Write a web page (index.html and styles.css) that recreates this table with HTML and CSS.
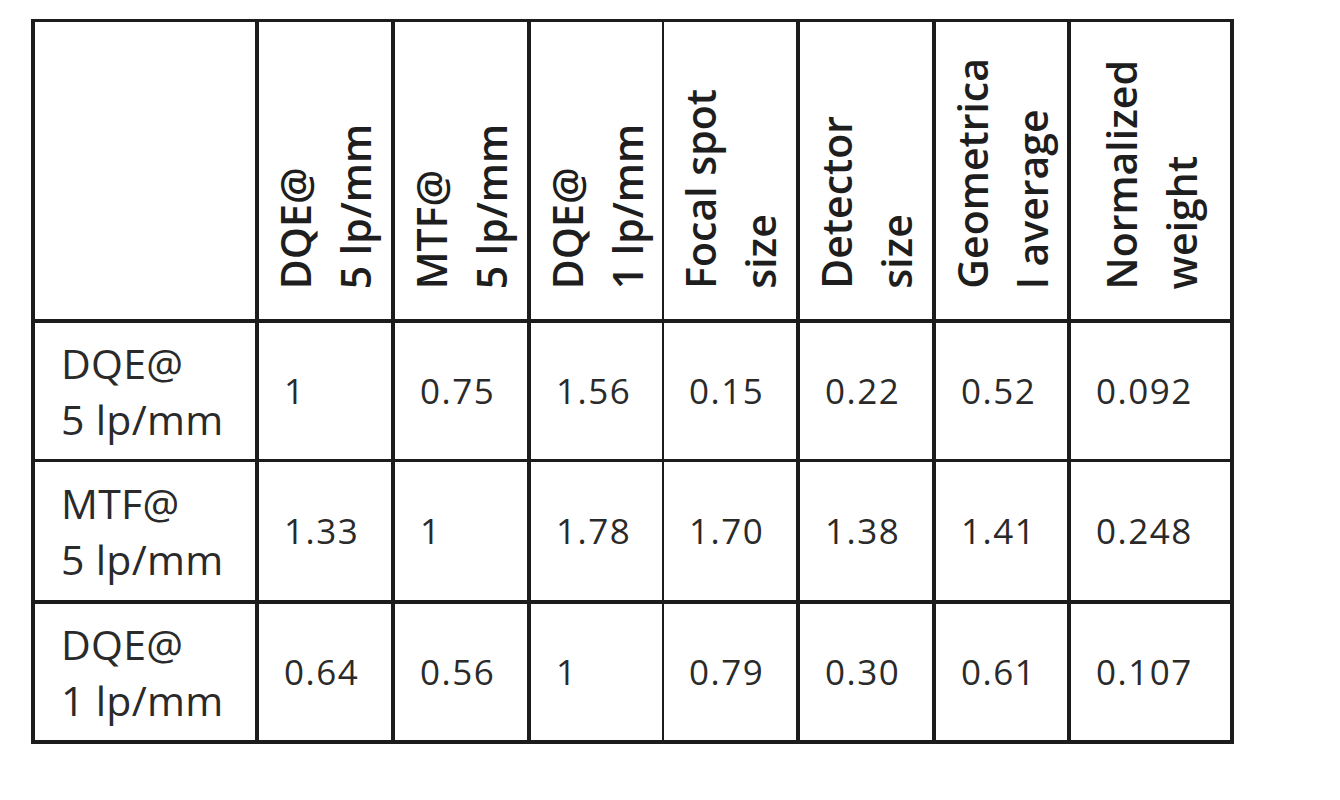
FILE: index.html
```html
<!DOCTYPE html>
<html lang="en">
<head>
<meta charset="utf-8">
<title>Weight table</title>
<link rel="stylesheet" href="styles.css">
</head>
<body>
<div class="table">
  <div class="cell head corner"></div>
  <div class="cell head"><div class="rot">DQE@<br>5 lp/mm</div></div>
  <div class="cell head"><div class="rot">MTF@<br>5 lp/mm</div></div>
  <div class="cell head thin"><div class="rot">DQE@<br>1 lp/mm</div></div>
  <div class="cell head"><div class="rot">Focal spot<br>size</div></div>
  <div class="cell head"><div class="rot">Detector<br>size</div></div>
  <div class="cell head"><div class="rot">Geometrica<br>l average</div></div>
  <div class="cell head"><div class="rot">Normalized<br>weight</div></div>

  <div class="cell label r1">DQE@<br>5 lp/mm</div>
  <div class="cell num r1">1</div>
  <div class="cell num r1">0.75</div>
  <div class="cell num r1 thin">1.56</div>
  <div class="cell num r1">0.15</div>
  <div class="cell num r1">0.22</div>
  <div class="cell num r1">0.52</div>
  <div class="cell num r1">0.092</div>

  <div class="cell label">MTF@<br>5 lp/mm</div>
  <div class="cell num">1.33</div>
  <div class="cell num">1</div>
  <div class="cell num thin">1.78</div>
  <div class="cell num">1.70</div>
  <div class="cell num">1.38</div>
  <div class="cell num">1.41</div>
  <div class="cell num">0.248</div>

  <div class="cell label">DQE@<br>1 lp/mm</div>
  <div class="cell num">0.64</div>
  <div class="cell num">0.56</div>
  <div class="cell num thin">1</div>
  <div class="cell num">0.79</div>
  <div class="cell num">0.30</div>
  <div class="cell num">0.61</div>
  <div class="cell num">0.107</div>
</div>
</body>
</html>
```
FILE: styles.css
```css
html, body {
  margin: 0;
  padding: 0;
  background: #ffffff;
}

body {
  font-family: "Open Sans", "Noto Sans", sans-serif;
  color: #2a2a2a;
}

.table {
  display: inline-grid;
  grid-template-columns: 224px 136px 136px 133px 136px 136px 135px 163px;
  grid-template-rows: 301px 139px 142px 140px;
  margin: 19px 0 0 31px;
  border-left: 4px solid #1c1c1c;
  border-top: 3px solid #1c1c1c;
}

.cell {
  box-sizing: border-box;
  border-right: 4px solid #1c1c1c;
  border-bottom: 4px solid #1c1c1c;
  display: flex;
  align-items: center;
}

.cell.thin {
  border-right-width: 2px;
}

.cell.r1 {
  border-bottom-width: 3px;
}

.head {
  justify-content: center;
  align-items: flex-end;
  padding-bottom: 30px;
}

.rot {
  writing-mode: vertical-rl;
  transform: rotate(180deg);
  font-size: 41px;
  line-height: 60px;
  font-weight: 600;
  color: #1e1e1e;
  white-space: nowrap;
}

.label {
  padding-left: 26px;
  font-size: 41px;
  line-height: 56px;
  letter-spacing: 0.3px;
}

.num {
  padding-left: 25px;
  font-size: 35px;
  line-height: 40px;
  letter-spacing: 1.5px;
}
```
